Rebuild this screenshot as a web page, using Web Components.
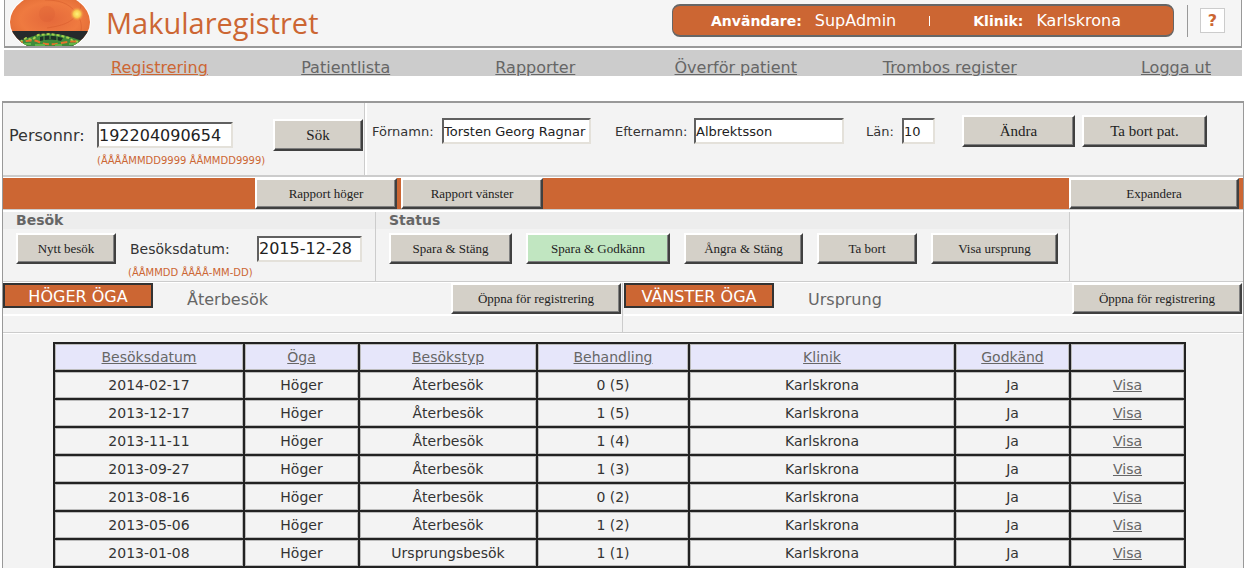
<!DOCTYPE html>
<html lang="sv">
<head>
<meta charset="utf-8">
<title>Makularegistret</title>
<style>
  body {
    margin: 0 5px 0 2px;
    background: #fff;
    color: #333;
    font-family: "DejaVu Sans", Verdana, sans-serif;
    font-size: 14px;
    --accent: #cc6633;
    --line: #ccc;
    --panel: #f3f3f3;
    --muted: #666;
  }
</style>
</head>
<body>
<registry-app></registry-app>
<script>
const define = (name, html, setup) => {
  const template = document.createElement('template');
  template.innerHTML = html;
  customElements.define(name, class extends HTMLElement {
    constructor() {
      super();
      this.attachShadow({ mode: 'open' }).append(template.content.cloneNode(true));
    }
    connectedCallback() {
      if (setup && !this.ready) { this.ready = true; setup(this, this.shadowRoot); }
    }
  });
};

/* Bevelled push button; width comes from --w */
define('reg-button', `
<style>
  :host { display: block; flex: none; width: var(--w, 100px); height: 32px; }
  button {
    box-sizing: border-box; width: 100%; height: 100%; padding: 0; margin: 0;
    font: var(--size, 13px) "Liberation Serif", "Times New Roman", serif; color: #222;
    background: var(--face, #d4d0c8);
    border: 2px solid; border-color: #fff #404040 #404040 #fff; border-radius: 0;
    box-shadow: inset -1px -1px 0 #808080; white-space: nowrap;
  }
</style>
<button type="button"><slot></slot></button>`);

/* Label with a sunken text box */
define('reg-field', `
<style>
  :host { display: flex; align-items: center; flex: none; font-size: 13px; }
  label { width: var(--lw); flex: none; white-space: nowrap; }
  input {
    box-sizing: border-box; width: var(--iw); height: 26px; margin: 0; padding: 0;
    font: inherit; font-size: var(--is, inherit); color: #222; background: #fff;
    border: 2px solid; border-color: #606060 #e4e1da #e4e1da #606060; border-radius: 0;
  }
</style>
<label for="box"></label><input id="box" type="text">`,
(host, root) => {
  root.querySelector('label').textContent = host.getAttribute('label');
  root.querySelector('input').value = host.getAttribute('value');
});

define('eye-logo', `
<style>:host { display: block; width: 82px; height: 46px; } svg { display: block; }</style>
<svg width="82" height="46" viewBox="0 0 82 46" role="img" aria-label="Makularegistret logotyp">
  <defs>
    <clipPath id="c"><ellipse cx="41" cy="22" rx="40" ry="29"/></clipPath>
    <radialGradient id="g" cx=".5" cy=".42" r=".6">
      <stop offset="0" stop-color="#e4683a"/><stop offset=".6" stop-color="#ef7a40"/><stop offset="1" stop-color="#e06a34"/>
    </radialGradient>
    <radialGradient id="s"><stop offset="0" stop-color="#fff27a"/><stop offset=".5" stop-color="#f8cf50"/><stop offset="1" stop-color="#f08a40" stop-opacity="0"/></radialGradient>
  </defs>
  <ellipse cx="41" cy="22" rx="41" ry="30" fill="#fff"/>
  <g clip-path="url(#c)">
    <rect width="82" height="46" fill="url(#g)"/>
    <circle cx="38" cy="14" r="8" fill="#dc6034" opacity=".3"/>
    <path d="M68 14C60 2 48 0 36 0M68 14C62 24 50 26 38 28M68 14C74 6 72 2 70 0M68 14C72 20 73 26 72 31" fill="none" stroke="#cf5528" opacity=".4"/>
    <circle cx="68" cy="14" r="7" fill="url(#s)"/>
    <rect y="31" width="82" height="15" fill="#262a2c"/>
    <path d="M8 42Q20 37 28 35Q41 32 54 35Q66 38 76 42V46H8Z" fill="#3f8b3a"/>
    <path d="M11 42L17 38L23 40L29 35L41 34L53 36L60 38L64 41L72 42" fill="none" stroke="#a8cf4c" stroke-width="2" stroke-dasharray="3 2"/>
    <path d="M8 44Q22 38 30 42T52 43T74 43" fill="none" stroke="#e4742c" stroke-width="2" stroke-dasharray="6 3"/>
    <path d="M31 37Q41 34 54 38L52 41Q41 38 31 41Z" fill="#1d3327"/>
    <path d="M35 36v5M41 35v4M48 36v5" stroke="#58a347"/>
    <path d="M14 44h8M26 45h10M46 45h7M60 44h8" stroke="#60b548" stroke-width="2"/>
  </g>
</svg>`);

define('site-header', `
<style>
  :host {
    display: flex; align-items: flex-start; height: 46px; margin: 0 2px; box-sizing: content-box;
    background: #f5f5f5; border: 1px solid #999; border-top: 0; border-bottom: 2px solid #999;
  }
  eye-logo { margin-left: 4px; }
  h1 { margin: 3px 0 0 15px; font: 500 29px/40px "Open Sans", sans-serif; color: var(--accent); flex: 1; }
  .user {
    display: flex; align-items: center; box-sizing: border-box; width: 502px; height: 33px;
    margin-top: 4px; padding: 0 38px; color: #fff; background: var(--accent);
    border: 1px solid #666; border-width: 2px 1px; border-radius: 8px; font-size: 16px; white-space: nowrap;
  }
  b { font-size: 14px; margin-right: 13px; }
  i { width: 1px; height: 10px; background: #fff; margin: 0 43px 0 33px; }
  .rule { width: 1px; height: 32px; margin: 5px 12px 0 13px; background: #999; }
  button {
    box-sizing: border-box; width: 25px; height: 25px; margin: 8px 16px 0 0; padding: 0;
    font: bold 16px "DejaVu Sans", sans-serif; color: var(--accent); background: #fff; border: 1px solid var(--line);
  }
</style>
<eye-logo></eye-logo><h1>Makularegistret</h1>
<div class="user"><b>Användare:</b><span>SupAdmin</span><i></i><b>Klinik:</b><span>Karlskrona</span></div>
<div class="rule"></div><button type="button" aria-label="Hjälp">?</button>`);

define('site-nav', `
<style>
  :host { display: block; margin: 2px 2px 0; background: var(--line); }
  nav { display: grid; grid-template-columns: 190fr 194fr 179fr 208fr 258fr auto; padding: 5px 31px 0 107px; height: 21px; font-size: 16px; line-height: 25px; }
  a { justify-self: start; color: var(--muted); white-space: nowrap; } a[aria-current] { color: var(--accent); }
</style>
<nav><a href="#" aria-current="page">Registrering</a><a href="#">Patientlista</a><a href="#">Rapporter</a><a href="#">Överför patient</a><a href="#">Trombos register</a><a href="#">Logga ut</a></nav>`);

define('patient-bar', `
<style>
  :host { display: grid; grid-template-columns: 362px 1fr; height: 72px; border-bottom: 2px solid var(--line); }
  .search { border-right: 1px solid var(--line); padding: 16px 1px 0 6px; }
  .row { display: flex; align-items: center; justify-content: space-between; }
  .search reg-field { font-size: 16px; --lw: 88px; --iw: 136px; }
  small { display: block; margin: 2px 0 0 88px; font-size: 10px; line-height: 16px; color: var(--accent); }
  .person { display: flex; align-items: center; padding: 0 0 16px 5px; border-left: 2px solid #fff; }
  .first { --lw: 70px; --iw: 149px; margin-right: 24px; }
  .last { --lw: 79px; --iw: 150px; margin-right: 22px; }
  .county { --lw: 36px; --iw: 33px; margin-right: 27px; }
  .person reg-button + reg-button { margin-left: 7px; }
  reg-button { --size: 15px; }
</style>
<div class="search">
  <div class="row"><reg-field label="Personnr:" value="192204090654"></reg-field><reg-button style="--w:90px">Sök</reg-button></div>
  <small>(ÅÅÅÅMMDD9999 ÅÅMMDD9999)</small>
</div>
<div class="person">
  <reg-field class="first" label="Förnamn:" value="Torsten Georg Ragnar"></reg-field>
  <reg-field class="last" label="Efternamn:" value="Albrektsson"></reg-field>
  <reg-field class="county" label="Län:" value="10"></reg-field>
  <reg-button style="--w:113px">Ändra</reg-button><reg-button style="--w:125px">Ta bort pat.</reg-button>
</div>`);

define('report-bar', `
<style>
  :host { display: flex; align-items: stretch; gap: 4px; height: 31px; margin-top: 1px; padding: 0 4px 0 252px;
    background: var(--accent); border-bottom: 1px solid var(--line); box-shadow: 0 -1px #fff, 0 2px #fff; }
  reg-button { height: 31px; --w: 142px; }
  .expand { --w: 170px; margin-left: auto; }
</style>
<reg-button>Rapport höger</reg-button><reg-button>Rapport vänster</reg-button><reg-button class="expand">Expandera</reg-button>`);

define('visit-bar', `
<style>
  :host { display: grid; grid-template-columns: 373px 1fr 173px; height: 69px; margin-top: 2px; border-bottom: 1px solid var(--line); }
  section { border-right: 1px solid var(--line); }
  h2 { margin: 0 0 4px; padding-left: 13px; font-size: 14px; line-height: 17px; color: var(--muted); background: #ededed; }
  .row { display: flex; align-items: center; gap: 14px; padding-left: 13px; height: 31px; }
  .row reg-button { height: 31px; }
  reg-field { font-size: 14px; --lw: 127px; --iw: 105px; --is: 16px; }
  small { display: block; margin-left: 125px; font-size: 10px; line-height: 17px; color: var(--accent); }
  .ok { --face: #c1e6c1; }
</style>
<section><h2>Besök</h2>
  <div class="row"><reg-button style="--w:100px">Nytt besök</reg-button><reg-field label="Besöksdatum:" value="2015-12-28"></reg-field></div>
  <small>(ÅÅMMDD ÅÅÅÅ-MM-DD)</small>
</section>
<section><h2>Status</h2>
  <div class="row">
    <reg-button style="--w:123px">Spara &amp; Stäng</reg-button><reg-button class="ok" style="--w:144px">Spara &amp; Godkänn</reg-button><reg-button style="--w:119px">Ångra &amp; Stäng</reg-button><reg-button>Ta bort</reg-button><reg-button style="--w:127px">Visa ursprung</reg-button>
  </div>
</section>
<div></div>`);

define('eye-panel', `
<style>
  :host { display: block; border-right: 1px solid var(--line); }
  .row { display: flex; align-items: flex-start; height: 31px; padding-right: 1px; border-bottom: 2px solid #fff; }
  strong {
    box-sizing: border-box; width: 150px; height: 25px; text-align: center; font-weight: normal;
    font-size: 16px; line-height: 23px; color: #fff; background: var(--accent); border: 2px solid #333;
  }
  span { flex: 1; padding-left: 34px; font-size: 16px; line-height: 33px; color: var(--muted); }
  reg-button { --w: 170px; height: 31px; }
</style>
<div class="row"><strong></strong><span><slot></slot></span><reg-button>Öppna för registrering</reg-button></div>`,
(host, root) => { root.querySelector('strong').textContent = host.getAttribute('eye'); });

define('visit-table', `
<style>
  :host { display: block; padding: 8px 57px 0 50px; border-top: 1px solid #fff; }
  table { width: 100%; border-collapse: collapse; table-layout: fixed; }
  th, td { height: 26px; padding: 0; text-align: center; font-weight: normal; line-height: 24px;
    border: 2px solid #222; box-shadow: inset 0 0 0 1px #bbb; }
  th { background: #e6e6fa; }
  a { color: var(--muted); }
  .date { width: 190px; } .short { width: 115px; } .type { width: 178px; } .count { width: 152px; }
</style>
<table>
  <colgroup><col class="date"><col class="short"><col class="type"><col class="count"><col><col class="short"><col class="short"></colgroup>
  <thead><tr><th><a href="#">Besöksdatum</a></th><th><a href="#">Öga</a></th><th><a href="#">Besökstyp</a></th><th><a href="#">Behandling</a></th><th><a href="#">Klinik</a></th><th><a href="#">Godkänd</a></th><th></th></tr></thead>
  <tbody></tbody>
</table>`,
(host, root) => {
  const rows = [
    ['2014-02-17', 'Återbesök', '0 (5)'], ['2013-12-17', 'Återbesök', '1 (5)'],
    ['2013-11-11', 'Återbesök', '1 (4)'], ['2013-09-27', 'Återbesök', '1 (3)'],
    ['2013-08-16', 'Återbesök', '0 (2)'], ['2013-05-06', 'Återbesök', '1 (2)'],
    ['2013-01-08', 'Ursprungsbesök', '1 (1)']
  ];
  root.querySelector('tbody').innerHTML = rows.map(([date, type, count]) =>
    `<tr><td>${date}</td><td>Höger</td><td>${type}</td><td>${count}</td><td>Karlskrona</td><td>Ja</td><td><a href="#">Visa</a></td></tr>`).join('');
});

define('registry-app', `
<style>
  :host { display: block; }
  main { margin-top: 25px; background: var(--panel); border: 1px solid #999; border-top-width: 2px; border-bottom: 0; }
  .eyes { display: grid; grid-template-columns: 1fr 1fr; height: 49px; border-top: 1px solid #fff; border-bottom: 1px solid var(--line); }
  .eyes :last-child { border-right: 0; padding-left: 1px; }
</style>
<site-header></site-header><site-nav></site-nav>
<main>
  <patient-bar></patient-bar><report-bar></report-bar><visit-bar></visit-bar>
  <div class="eyes"><eye-panel eye="HÖGER ÖGA">Återbesök</eye-panel><eye-panel eye="VÄNSTER ÖGA">Ursprung</eye-panel></div>
  <visit-table></visit-table>
</main>`);
</script>
</body>
</html>
